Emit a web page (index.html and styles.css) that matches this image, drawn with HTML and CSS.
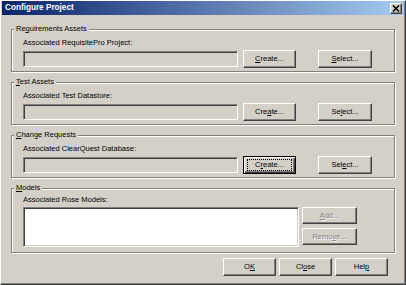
FILE: index.html
```html
<!DOCTYPE html>
<html>
<head>
<meta charset="utf-8">
<title>Configure Project</title>
<link rel="stylesheet" href="styles.css">
</head>
<body>
<div class="window">
  <div class="titlebar">
    <span class="title">Configure Project</span>
    <span class="close-btn">
      <svg width="8" height="7" viewBox="0 0 8 7"><path d="M1 0.5 L7 6.5 M7 0.5 L1 6.5" stroke="#000" stroke-width="1.6"/></svg>
    </span>
  </div>
  <div class="content">
    <div class="group">
      <span class="legend">Re<u>q</u>uirements Assets</span>
      <div class="field-label">Associated RequisitePro Project:</div>
      <div class="row">
        <div class="field"></div>
        <button class="btn btn-create"><u>C</u>reate...</button>
        <button class="btn btn-select"><u>S</u>elect...</button>
      </div>
    </div>
    <div class="group">
      <span class="legend"><u>T</u>est Assets</span>
      <div class="field-label">Associated Test Datastore:</div>
      <div class="row">
        <div class="field"></div>
        <button class="btn btn-create">Cre<u>a</u>te...</button>
        <button class="btn btn-select">Se<u>l</u>ect...</button>
      </div>
    </div>
    <div class="group">
      <span class="legend"><u>C</u>hange Requests</span>
      <div class="field-label">Associated ClearQuest Database:</div>
      <div class="row">
        <div class="field"></div>
        <button class="btn btn-create focus"><span class="focus-ring">C<u>r</u>eate...</span></button>
        <button class="btn btn-select">Sel<u>e</u>ct...</button>
      </div>
    </div>
    <div class="group group-models">
      <span class="legend"><u>M</u>odels</span>
      <div class="field-label">Associated Rose Models:</div>
      <div class="row row-top">
        <div class="listbox"></div>
        <div class="side-buttons">
          <button class="btn btn-side disabled"><u>A</u>dd...</button>
          <button class="btn btn-side disabled">Remo<u>v</u>e...</button>
        </div>
      </div>
    </div>
    <div class="footer">
      <button class="btn btn-foot">O<u>K</u></button>
      <button class="btn btn-foot">Cl<u>o</u>se</button>
      <button class="btn btn-foot">Hel<u>p</u></button>
    </div>
  </div>
</div>
</body>
</html>
```

FILE: styles.css
```css
html, body {
  margin: 0;
  padding: 0;
  background: #d4d0c8;
}

.window {
  width: 406px;
  height: 285px;
  box-sizing: border-box;
  background: #d4d0c8;
  border: 1px solid;
  border-color: #ffffff #404040 #404040 #ffffff;
  box-shadow: inset -1px -1px #808080;
  font-family: "Liberation Sans", Arial, sans-serif;
  font-size: 7.5px;
  color: #000;
  overflow: hidden;
}

.titlebar {
  height: 14px;
  margin: 0 1px;
  background: linear-gradient(to right, #0a246a, #a6caf0);
  display: flex;
  align-items: center;
  justify-content: space-between;
  padding: 0 2px 0 3px;
}

.title {
  color: #fff;
  font-weight: bold;
  font-size: 8.2px;
  line-height: 10px;
}

.close-btn {
  width: 12px;
  height: 11px;
  box-sizing: border-box;
  background: #d4d0c8;
  border: 1px solid;
  border-color: #ffffff #404040 #404040 #ffffff;
  box-shadow: inset -1px -1px #808080;
  display: flex;
  align-items: center;
  justify-content: center;
}

.close-btn svg {
  display: block;
}

.content {
  padding: 14px 10px 0 10px;
}

.group {
  position: relative;
  height: 43px;
  box-sizing: border-box;
  border: 1px solid #808080;
  box-shadow: inset 1px 1px #ffffff, 1px 1px #ffffff;
  padding: 8px 0 0 11px;
  margin-bottom: 10px;
}

.group-models {
  height: 65px;
  padding-top: 6px;
  margin-bottom: 0;
}

.legend {
  position: absolute;
  top: -6px;
  left: 2px;
  padding: 0 2px;
  line-height: 10px;
  background: #d4d0c8;
  white-space: nowrap;
}

.field-label {
  line-height: 10px;
  white-space: nowrap;
}

.row {
  display: flex;
  align-items: center;
  margin-top: 2px;
  height: 18px;
}

.row-top {
  align-items: flex-start;
  height: auto;
}

.field {
  width: 215px;
  height: 16px;
  box-sizing: border-box;
  border: 1px solid;
  border-color: #808080 #ffffff #ffffff #808080;
  box-shadow: inset 1px 1px #404040, inset -1px -1px #d4d0c8;
  background: #d4d0c8;
}

.listbox {
  width: 276px;
  height: 40px;
  box-sizing: border-box;
  border: 1px solid;
  border-color: #808080 #ffffff #ffffff #808080;
  box-shadow: inset 1px 1px #404040, inset -1px -1px #d4d0c8;
  background: #ffffff;
}

.btn {
  font-family: "Liberation Sans", Arial, sans-serif;
  font-size: 7.5px;
  color: #000;
  background: #d4d0c8;
  box-sizing: border-box;
  border: 1px solid;
  border-color: #ffffff #404040 #404040 #ffffff;
  box-shadow: inset -1px -1px #808080;
  padding: 0;
  margin: 0;
  height: 18px;
  line-height: 10px;
  display: flex;
  align-items: center;
  justify-content: center;
  white-space: nowrap;
}

.btn u {
  text-underline-offset: 1px;
}

.btn-create {
  width: 53px;
  margin-left: 5px;
}

.btn-select {
  width: 54px;
  margin-left: 22px;
}

.btn.focus {
  border: 1px solid #000;
  box-shadow: inset 1px 1px #ffffff, inset -1px -1px #404040, inset -2px -2px #808080;
}

.focus-ring {
  display: block;
  width: 43px;
  height: 10px;
  box-sizing: border-box;
  outline: 1px dotted #000;
  line-height: 10px;
  text-align: center;
}

.side-buttons {
  display: flex;
  flex-direction: column;
  gap: 4px;
  margin-left: 3px;
}

.btn-side {
  width: 55px;
  height: 17px;
}

.btn.disabled {
  color: #808080;
  text-shadow: 1px 1px #ffffff;
}

.footer {
  display: flex;
  justify-content: flex-end;
  gap: 3px;
  margin-top: 5px;
  padding-right: 7px;
}

.btn-foot {
  width: 53px;
  height: 18px;
}
```
